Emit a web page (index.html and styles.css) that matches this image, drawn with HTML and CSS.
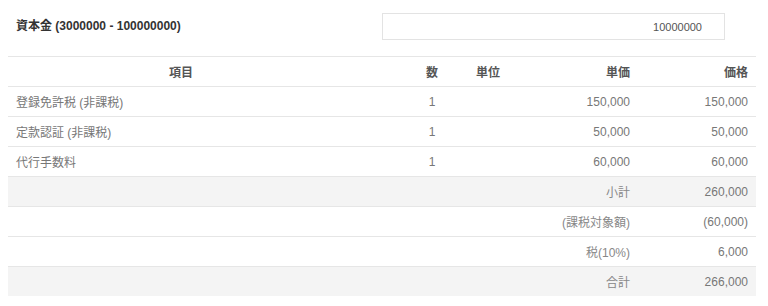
FILE: index.html
```html
<!DOCTYPE html>
<html lang="ja">
<head>
<meta charset="utf-8">
<link rel="stylesheet" href="styles.css">
</head>
<body>
<div class="page">
  <div class="capital">
    <label class="capital-label">資本金 (3000000 - 100000000)</label>
    <div class="capital-field"><input class="capital-input" type="text" value="10000000"></div>
  </div>
  <div class="table">
    <div class="row head">
      <div class="c item">項目</div>
      <div class="c qty">数</div>
      <div class="c unit">単位</div>
      <div class="c price">単価</div>
      <div class="c total">価格</div>
    </div>
    <div class="row">
      <div class="c item">登録免許税 (非課税)</div>
      <div class="c qty">1</div>
      <div class="c unit"></div>
      <div class="c price">150,000</div>
      <div class="c total">150,000</div>
    </div>
    <div class="row">
      <div class="c item">定款認証 (非課税)</div>
      <div class="c qty">1</div>
      <div class="c unit"></div>
      <div class="c price">50,000</div>
      <div class="c total">50,000</div>
    </div>
    <div class="row">
      <div class="c item">代行手数料</div>
      <div class="c qty">1</div>
      <div class="c unit"></div>
      <div class="c price">60,000</div>
      <div class="c total">60,000</div>
    </div>
    <div class="row sum shaded">
      <div class="c label">小計</div>
      <div class="c total">260,000</div>
    </div>
    <div class="row sum">
      <div class="c label">(課税対象額)</div>
      <div class="c total">(60,000)</div>
    </div>
    <div class="row sum">
      <div class="c label">税(10%)</div>
      <div class="c total">6,000</div>
    </div>
    <div class="row sum shaded">
      <div class="c label">合計</div>
      <div class="c total">266,000</div>
    </div>
  </div>
</div>
</body>
</html>
```
FILE: styles.css
```css
* { box-sizing: border-box; }
html, body { margin: 0; padding: 0; background: #fff; }
body {
  font-family: "Liberation Sans", Arial, "Noto Sans CJK JP", sans-serif;
  font-size: 12px;
  color: #777;
}
.page { padding: 13px 12px 0 8px; }
.capital {
  display: grid;
  grid-template-columns: 374px 374px;
  align-items: center;
  margin-bottom: 16px;
}
.capital-label {
  padding-left: 8px;
  font-weight: bold;
  color: #333;
  font-size: 12px;
  padding-bottom: 5px;
}
.capital-input {
  display: block;
  width: 343px;
  height: 27px;
  border: 1px solid #e3e3e3;
  background: #fff;
  font-family: "Liberation Sans", Arial, sans-serif;
  font-size: 11px;
  color: #555;
  text-align: right;
  padding: 0 22px 0 8px;
  margin: 0;
  outline: none;
}
.table { width: 748px; }
.row {
  display: grid;
  grid-template-columns: 388px 72px 92px 78px 118px;
  height: 30px;
  border-top: 1px solid #e6e6e6;
  align-items: center;
}
.c { padding: 0 8px; white-space: nowrap; }
.head { color: #555; font-weight: bold; }
.head .item { text-align: center; padding-right: 50px; }
.qty { text-align: center; }
.unit { text-align: left; }
.price, .total { text-align: right; }
.head .price, .head .total { font-weight: bold; }
.sum .label {
  grid-column: 1 / 5;
  text-align: right;
  color: #888;
}
.sum .total { grid-column: 5; }
.shaded { background: #f4f4f4; }
```
